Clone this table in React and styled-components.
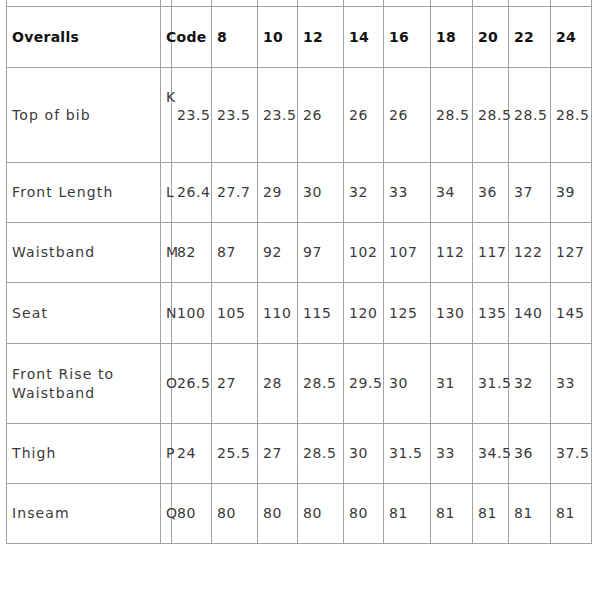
import React from "react";
import styled, { createGlobalStyle } from "styled-components";

const GlobalStyle = createGlobalStyle`
  html, body {
    margin: 0;
    padding: 0;
    background: #ffffff;
  }
  body {
    font-family: "DejaVu Sans", "Liberation Sans", sans-serif;
  }
`;

const columns = [154, 11, 40, 46, 40, 46, 40, 47, 42, 36, 42, 41];
const sizes = ["8", "10", "12", "14", "16", "18", "20", "22", "24"];

const rows = [
  {
    label: "Top of bib",
    code: "K",
    height: 95,
    raised: true,
    values: ["23.5", "23.5", "23.5", "26", "26", "26", "28.5", "28.5", "28.5", "28.5"],
  },
  {
    label: "Front Length",
    code: "L",
    height: 60,
    values: ["26.4", "27.7", "29", "30", "32", "33", "34", "36", "37", "39"],
  },
  {
    label: "Waistband",
    code: "M",
    height: 60,
    values: ["82", "87", "92", "97", "102", "107", "112", "117", "122", "127"],
  },
  {
    label: "Seat",
    code: "N",
    height: 61,
    values: ["100", "105", "110", "115", "120", "125", "130", "135", "140", "145"],
  },
  {
    label: ["Front Rise to", "Waistband"],
    code: "O",
    height: 80,
    values: ["26.5", "27", "28", "28.5", "29.5", "30", "31", "31.5", "32", "33"],
  },
  {
    label: "Thigh",
    code: "P",
    height: 60,
    values: ["24", "25.5", "27", "28.5", "30", "31.5", "33", "34.5", "36", "37.5"],
  },
  {
    label: "Inseam",
    code: "Q",
    height: 60,
    values: ["80", "80", "80", "80", "80", "81", "81", "81", "81", "81"],
  },
];

function App() {
  return (
    <>
      <GlobalStyle />
      <Page>
        <Table>
          <Row $height={7}>
            {columns.map((w, i) => (
              <Cell key={i} $width={w} />
            ))}
          </Row>
          <Row $height={61}>
            <HeadCell $width={columns[0]}>Overalls</HeadCell>
            <HeadCell $width={columns[1]}>Code</HeadCell>
            <HeadCell $width={columns[2]} />
            {sizes.map((s, i) => (
              <HeadCell key={s} $width={columns[i + 3]}>
                {s}
              </HeadCell>
            ))}
          </Row>
          {rows.map((row) => (
            <Row key={row.code} $height={row.height}>
              <LabelCell $width={columns[0]}>
                {Array.isArray(row.label) ? (
                  <span>
                    {row.label[0]}
                    <br />
                    {row.label[1]}
                  </span>
                ) : (
                  row.label
                )}
              </LabelCell>
              <CodeCell $width={columns[1]} $raised={row.raised}>
                {row.code}
              </CodeCell>
              {row.values.map((v, i) => (
                <Cell key={i} $width={columns[i + 2]}>
                  {v}
                </Cell>
              ))}
            </Row>
          ))}
        </Table>
      </Page>
    </>
  );
}

export default App;

const Page = styled.div`
  width: 600px;
  height: 600px;
  background: #ffffff;
  overflow: hidden;
`;

const Table = styled.div`
  display: flex;
  flex-direction: column;
  width: fit-content;
  margin-left: 6px;
  border-left: 1px solid #a3a3a3;
`;

const Row = styled.div`
  display: flex;
  height: ${(p) => p.$height}px;
`;

const Cell = styled.div`
  position: relative;
  box-sizing: border-box;
  display: flex;
  align-items: center;
  flex: none;
  width: ${(p) => p.$width}px;
  height: 100%;
  padding-left: 5px;
  border-right: 1px solid #a3a3a3;
  border-bottom: 1px solid #a3a3a3;
  background: transparent;
  white-space: nowrap;
  font-size: 14px;
  letter-spacing: 0.6px;
  line-height: 19px;
  color: #3a3a3a;
`;

const HeadCell = styled(Cell)`
  font-weight: bold;
  color: #111111;
  letter-spacing: 0.3px;
`;

const LabelCell = styled(Cell)`
  letter-spacing: 1.1px;
`;

const CodeCell = styled(Cell)`
  align-items: ${(p) => (p.$raised ? "flex-start" : "center")};
  padding-top: ${(p) => (p.$raised ? "20px" : "0")};
`;
